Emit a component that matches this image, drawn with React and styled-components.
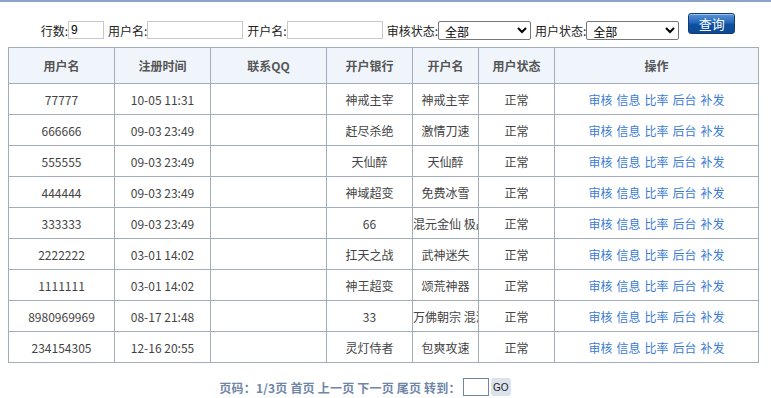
import React from "react"
import styled, { createGlobalStyle } from "styled-components"

const GlobalStyle = createGlobalStyle`
  body {
    margin: 0;
    font-family: "Noto Sans CJK SC", "Liberation Sans", sans-serif;
    font-size: 12px;
    color: #444;
    background: #fff;
  }
`

const rows = [
  ["77777", "10-05 11:31", "", "神戒主宰", "神戒主宰"],
  ["666666", "09-03 23:49", "", "赶尽杀绝", "激情刀速"],
  ["555555", "09-03 23:49", "", "天仙醉", "天仙醉"],
  ["444444", "09-03 23:49", "", "神域超变", "免费冰雪"],
  ["333333", "09-03 23:49", "", "66", "混元金仙 极品"],
  ["2222222", "03-01 14:02", "", "扛天之战", "武神迷失"],
  ["1111111", "03-01 14:02", "", "神王超变", "颂荒神器"],
  ["8980969969", "08-17 21:48", "", "33", "万佛朝宗 混沌"],
  ["234154305", "12-16 20:55", "", "灵灯侍者", "包爽攻速"],
]

const cols = [106, 96, 116, 86, 66, 76, 204]
const heads = ["用户名", "注册时间", "联系QQ", "开户银行", "开户名", "用户状态", "操作"]
const actions = ["审核", "信息", "比率", "后台", "补发"]

const App = () => {
  return (
    <Page>
      <GlobalStyle />
      <FilterBar>
        <Field>
          行数:<TextInput $w={36} defaultValue="9" />
        </Field>
        <Field>
          用户名:<TextInput $w={96} />
        </Field>
        <Field>
          开户名:<TextInput $w={96} />
        </Field>
        <Field>
          审核状态:
          <Select $w={93}>
            <option>全部</option>
          </Select>
        </Field>
        <Field>
          用户状态:
          <Select $w={93}>
            <option>全部</option>
          </Select>
        </Field>
        <QueryButton>查询</QueryButton>
      </FilterBar>
      <Table>
        <colgroup>
          {cols.map((w, i) => (
            <col key={i} style={{ width: w }} />
          ))}
        </colgroup>
        <thead>
          <tr>
            {heads.map((h) => (
              <Th key={h}>{h}</Th>
            ))}
          </tr>
        </thead>
        <tbody>
          {rows.map((r) => (
            <tr key={r[0]}>
              {r.map((c, i) => (
                <Td key={i}>{c}</Td>
              ))}
              <Td>正常</Td>
              <Td>
                <Actions>
                  {actions.map((a) => (
                    <ActionLink key={a} href="#">
                      {a}
                    </ActionLink>
                  ))}
                </Actions>
              </Td>
            </tr>
          ))}
        </tbody>
      </Table>
      <Pager>
        页码：1/3页 首页 上一页 下一页 尾页 转到：
        <PageInput />
        <GoButton>GO</GoButton>
      </Pager>
    </Page>
  )
}

const Page = styled.div`
  border-top: 2px solid #8da2c9;
  padding: 0 13px 0 8px;
  height: 396px;
  box-sizing: border-box;
`

const FilterBar = styled.div`
  display: flex;
  justify-content: center;
  align-items: center;
  gap: 4px;
  height: 45px;
  padding-left: 10px;
  color: #222;
`

const Field = styled.label`
  display: flex;
  align-items: center;
  white-space: nowrap;
  margin-top: 11px;
`

const TextInput = styled.input`
  width: ${(p) => p.$w}px;
  height: 18px;
  box-sizing: border-box;
  border: 1px solid #c8c8c8;
  padding: 0 2px;
  font: 12px "Liberation Sans", sans-serif;
  color: #000;
  outline: none;
`

const Select = styled.select`
  width: ${(p) => p.$w}px;
  height: 19px;
  box-sizing: border-box;
  border: 1px solid #777;
  border-radius: 2px;
  padding: 0 2px;
  font: 12px "Noto Sans CJK SC", sans-serif;
  color: #000;
  background: #fff;
`

const QueryButton = styled.button`
  width: 47px;
  height: 21px;
  margin-left: 5px;
  margin-top: -2px;
  border: 1px solid #0f3c78;
  border-radius: 3px;
  background: linear-gradient(#5b95d8 0%, #2567b8 45%, #10509e 55%, #0e4a92 100%);
  box-shadow: inset 0 1px 0 #9cc2ee;
  color: #fff;
  font: 13px "Noto Sans CJK SC", sans-serif;
  line-height: 18px;
  padding: 0;
`

const Table = styled.table`
  width: 750px;
  table-layout: fixed;
  border-collapse: collapse;
  border: 1px solid #a2acba;
`

const Th = styled.th`
  height: 35px;
  background: #f0f5fc;
  border: 1px solid #a2acba;
  color: #555;
  font-weight: bold;
  font-size: 12px;
  padding: 0;
`

const Td = styled.td`
  height: 30px;
  border: 1px solid #a2acba;
  text-align: center;
  white-space: nowrap;
  overflow: hidden;
  padding: 0;
  color: #444;
`

const Actions = styled.div`
  display: flex;
  justify-content: center;
  gap: 4px;
`

const ActionLink = styled.a`
  color: #3b7bd4;
  text-decoration: none;
`

const Pager = styled.div`
  display: flex;
  align-items: center;
  justify-content: center;
  padding-right: 36px;
  margin-top: 15px;
  font-weight: bold;
  color: #6f86a8;
  white-space: nowrap;
  letter-spacing: 0.2px;
`

const PageInput = styled.input`
  width: 26px;
  height: 18px;
  box-sizing: border-box;
  border: 1px solid #6f86a8;
  margin-left: 2px;
  padding: 0;
`

const GoButton = styled.button`
  height: 18px;
  width: 20px;
  margin-left: 2px;
  padding: 0;
  border: none;
  border-radius: 3px;
  background: #dde3ec;
  color: #222;
  font: 10px "Liberation Sans", sans-serif;
`

export default App
